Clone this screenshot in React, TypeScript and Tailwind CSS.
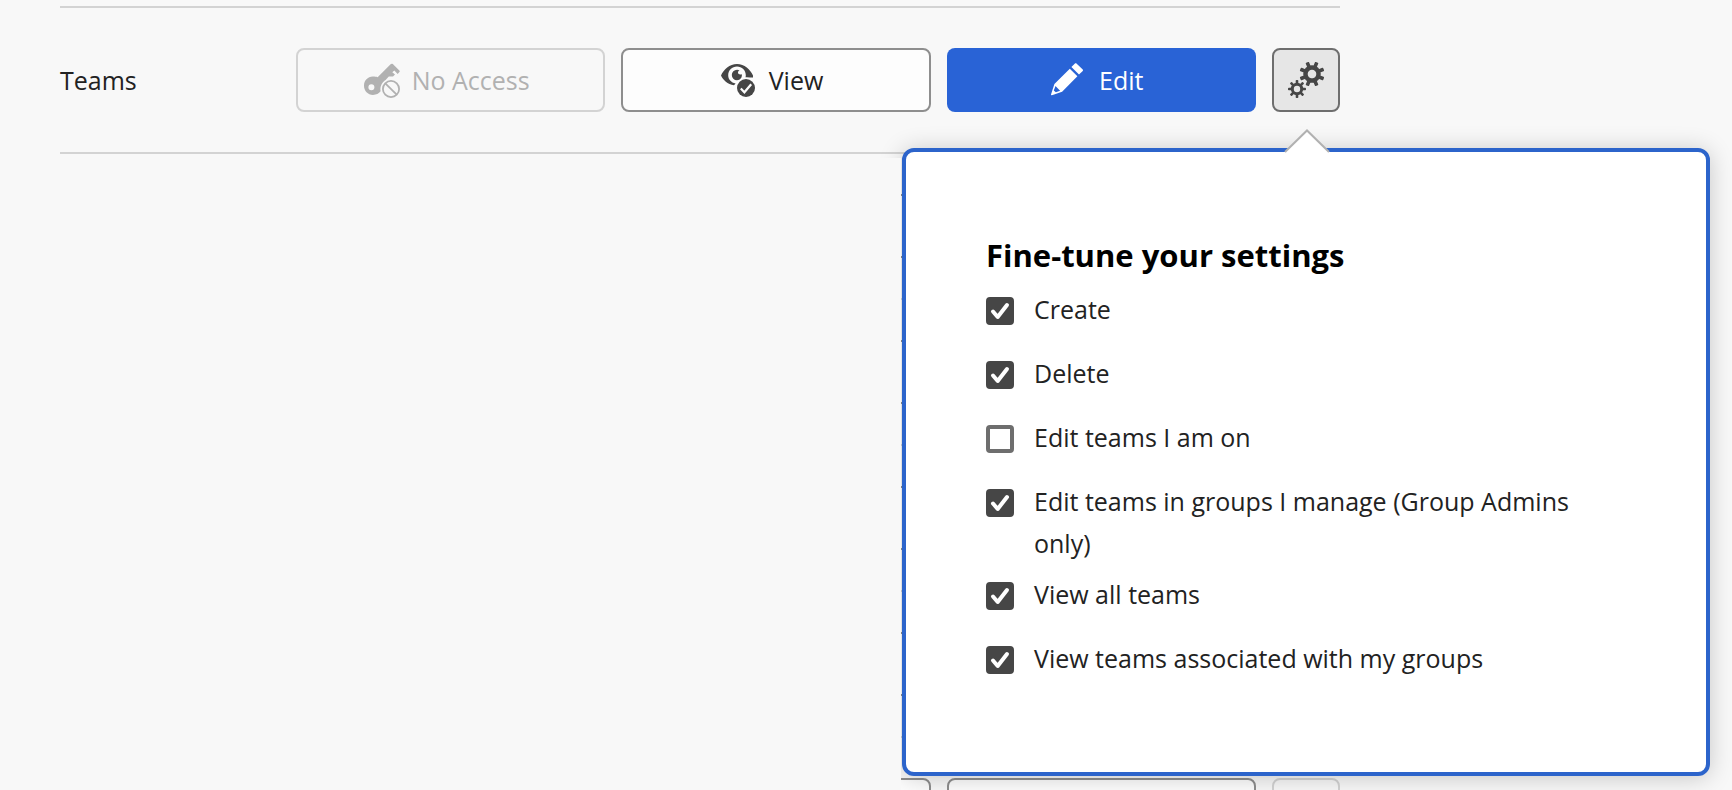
import React from "react";

const toothAngles = [0, 45, 90, 135, 180, 225, 270, 315];

function Gear({ cx, cy, body, hole, reach, tooth, turn }: {
  cx: number; cy: number; body: number; hole: number; reach: number; tooth: number; turn: number;
}) {
  const ring = (body + hole) / 2;
  return (
    <g transform={`translate(${cx} ${cy}) rotate(${turn})`}>
      <circle r={ring} fill="none" stroke="currentColor" strokeWidth={body - hole} />
      {toothAngles.map((a) => (
        <rect key={a} x={-tooth / 2} y={-reach} width={tooth} height={reach - ring} rx="0.8" fill="currentColor" transform={`rotate(${a})`} />
      ))}
    </g>
  );
}

function GearsIcon() {
  return (
    <svg width="36" height="36" viewBox="0 0 36 36" aria-hidden="true">
      <Gear cx={24} cy={12} body={8.8} hole={4.3} reach={12.6} tooth={3.6} turn={22.5} />
      <Gear cx={9} cy={27} body={6.2} hole={3.2} reach={9} tooth={2.6} turn={0} />
    </svg>
  );
}

function KeyOffIcon() {
  return (
    <svg width="36" height="36" viewBox="0 0 36 36" aria-hidden="true">
      <path
        fill="currentColor"
        fillRule="evenodd"
        d="M26.6 1.2 13.6 14.2C12.3 13.8 10.8 13.6 8.8 13.6 3.6 13.8 0 17.6 0 22.8 0 28 3.8 31.9 9 31.9 12.4 31.9 14.7 30.6 16.6 28.3 15.8 23.8 17.6 19.6 21.6 17L24.8 13.6 29 13.5 31 11.6 28.3 9.2 30.3 7.6 33.7 11 35.8 8.6 35.6 7.8 28.8 1.1C28.1.5 27.3.5 26.6 1.2ZM7.4 21.3A3 3 0 1 1 7.4 27.3 3 3 0 0 1 7.4 21.3Z"
      />
      <circle cx="27" cy="26" r="8.1" fill="none" stroke="currentColor" strokeWidth="1.8" />
      <path d="m21.3 20.3 11.4 11.4" stroke="currentColor" strokeWidth="1.8" />
    </svg>
  );
}

function EyeCheckIcon() {
  return (
    <svg width="36" height="36" viewBox="0 0 36 36" aria-hidden="true">
      <path
        fill="currentColor"
        d="M16 1C8.6 1 2.6 6.6 0 12.4 2 17 6.600 21 13 22.300L14.600 20.400C10.200 19.600 7.200 16.300 7.200 12.200 7.200 7.400 11.100 3.500 16 3.500S24.800 7.400 24.800 12.200C24.800 13 24.700 13.600 24.500 14.200 27 14 29.600 14.400 32 14.600V12.400C29.400 6.600 23.400 1 16 1Z"
      />
      <path
        fill="currentColor"
        d="M16 6.800C17 6.800 17.900 7 18.600 7.400 17.400 7.700 16.800 8.700 17 9.800 17.200 11.200 18.700 11.900 20.800 11.200 21.400 14 19.400 17.200 16 17.200A5.200 5.200 0 0 1 16 6.800Z"
      />
      <circle cx="25" cy="25" r="9" fill="currentColor" />
      <path d="m19.800 25.600 3.600 3.700 6.800-8.100" fill="none" stroke="#fdfdfd" strokeWidth="2.200" />
    </svg>
  );
}

function PencilIcon() {
  return (
    <svg width="36" height="36" viewBox="0 0 36 36" aria-hidden="true">
      <path fill="currentColor" d="M23.700.7 20.400 4 28 11.600 31.500 8.300C32.200 7.600 32.200 7 31.500 6.300L25.700.7C25.100.1 24.300.1 23.700.7Z" />
      <path
        fill="currentColor"
        fillRule="evenodd"
        d="M18.800 5.700 3.400 21 0 31.500C-.1 32.100.3 32.400.9 32.200L11.100 28.800 26.400 13.300ZM4.500 23 9.100 27.700 4.800 29.300 2.800 27.400Z"
      />
    </svg>
  );
}

const levelBase = "flex h-16 items-center justify-center gap-3 rounded-lg pt-0.5 pr-2 text-[25px]";

const options = [
  { id: "create", label: "Create", checked: true },
  { id: "delete", label: "Delete", checked: true },
  { id: "edit-on", label: "Edit teams I am on", checked: false },
  { id: "edit-groups", label: "Edit teams in groups I manage (Group Admins only)", checked: true },
  { id: "view-all", label: "View all teams", checked: true },
  { id: "view-groups", label: "View teams associated with my groups", checked: true },
];

function Option({ id, label, checked }: { id: string; label: string; checked: boolean }) {
  return (
    <li className="flex min-h-16 items-start gap-5 pb-[9px]">
      <span className="grid shrink-0 pt-[9px]">
        <input
          id={id}
          type="checkbox"
          defaultChecked={checked}
          className="peer col-start-1 row-start-1 size-7 appearance-none rounded-[4px] border-4 border-[#6e6e6e] bg-white checked:border-[#464646] checked:bg-[#464646]"
        />
        <svg viewBox="0 0 28 28" aria-hidden="true" className="pointer-events-none invisible col-start-1 row-start-1 size-7 peer-checked:visible">
          <path d="m7 14.500 4.700 5.500L21 8" fill="none" stroke="#fff" strokeWidth="4" strokeLinecap="round" strokeLinejoin="round" />
        </svg>
      </span>
      <label htmlFor={id} className="text-[25px] leading-[42px] text-[#222]">{label}</label>
    </li>
  );
}

function Popover() {
  return (
    <section className="absolute top-[100px] -right-[370px] z-10 w-[808px] rounded-xl border-4 border-[#2c64cb] bg-white px-20 pt-[82px] pb-[71px] shadow-[0_2px_24px_rgba(0,0,0,0.2)]">
      <div className="absolute top-1.5 right-[calc(100%+5px)] -bottom-10 w-10 bg-[#f8f8f8]" />
      <svg width="46" height="24" viewBox="0 0 46 24" aria-hidden="true" className="absolute -top-[23px] left-[378px]">
        <path d="M1 23 23 1.500 45 23Z" fill="#fff" />
        <path d="M1 23 23 1.500 45 23" fill="none" stroke="#b1b1b1" strokeWidth="2" />
      </svg>
      <h2 className="text-[31px] leading-[42px] font-bold text-black">Fine-tune your settings</h2>
      <ul className="pt-3">
        {options.map((o) => (
          <Option key={o.id} {...o} />
        ))}
      </ul>
    </section>
  );
}

function BackRow() {
  return (
    <div className="flex justify-end gap-4 border-t-2 border-[#d3d3d3] py-10">
      <div className="h-16 w-[310px] shrink-0 rounded-lg border-2 border-[#8e8e8e] bg-[#fdfdfd]" />
      <div className="h-16 w-[309px] shrink-0 rounded-lg border-2 border-[#8e8e8e] bg-[#fdfdfd]" />
      <div className="h-16 w-[68px] shrink-0 rounded-lg border-2 border-[#d3d3d3]" />
    </div>
  );
}

export default function App() {
  return (
    <main className="h-screen overflow-hidden bg-[#f8f8f8] pt-1.5 pr-[392px] pl-[60px] font-['Open_Sans','Noto_Sans',sans-serif] text-[#222]">
      <div className="grid grid-cols-[220px_1fr_1fr_1fr_68px] items-center gap-4 border-y-2 border-[#d3d3d3] py-10">
        <span className="pt-0.5 text-[25px]">Teams</span>
        <button type="button" disabled className={`${levelBase} border-2 border-[#d3d3d3] text-[#b1b1b1]`}>
          <KeyOffIcon />
          No Access
        </button>
        <button type="button" className={`${levelBase} border-2 border-[#8e8e8e] bg-[#fdfdfd]`}>
          <span className="text-[#464646]"><EyeCheckIcon /></span>
          View
        </button>
        <button type="button" className={`${levelBase} bg-[#2963d6] text-white`}>
          <PencilIcon />
          Edit
        </button>
        <div className="relative">
          <button type="button" aria-label="Settings" className="flex h-16 w-full items-center justify-center rounded-lg border-2 border-[#6e6e6e] bg-[#e6e6e6] text-[#464646]">
            <GearsIcon />
          </button>
          <Popover />
        </div>
      </div>
      <div className="-mt-0.5 ml-auto w-[439px] overflow-hidden" aria-hidden="true">
        {[0, 1, 2, 3, 4].map((n) => (
          <BackRow key={n} />
        ))}
      </div>
    </main>
  );
}
